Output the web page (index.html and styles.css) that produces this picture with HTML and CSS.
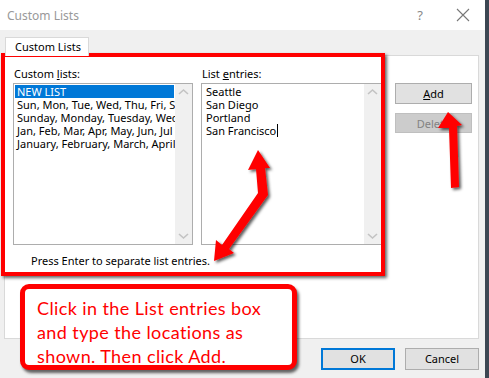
FILE: index.html
```html
<!DOCTYPE html>
<html>
<head>
<meta charset="utf-8">
<link rel="stylesheet" href="styles.css">
</head>
<body>
<div class="window">
  <div class="titlebar">
    <span class="title">Custom Lists</span>
    <span class="help">?</span>
    <svg class="close" width="14" height="14" viewBox="0 0 14 14"><path d="M1 1L13 13M13 1L1 13" stroke="#777" stroke-width="1.1" fill="none"/></svg>
  </div>
  <div class="client">
    <div class="tab">Custom Lists</div>
    <div class="panel">
      <div class="cols">
        <div class="col col-lists">
          <div class="label">Custom <u>l</u>ists:</div>
          <div class="listbox">
            <div class="items">
              <div class="item selected">NEW LIST</div>
              <div class="item">Sun, Mon, Tue, Wed, Thu, Fri, Sat</div>
              <div class="item">Sunday, Monday, Tuesday, Wednesday</div>
              <div class="item">Jan, Feb, Mar, Apr, May, Jun, Jul</div>
              <div class="item">January, February, March, April</div>
            </div>
            <div class="scroll">
              <svg width="17" height="10" viewBox="0 0 17 10"><path d="M4 7L8.5 3L13 7" stroke="#c3c3c3" stroke-width="1.6" fill="none"/></svg>
              <svg width="17" height="10" viewBox="0 0 17 10"><path d="M4 3L8.5 7L13 3" stroke="#c3c3c3" stroke-width="1.6" fill="none"/></svg>
            </div>
          </div>
        </div>
        <div class="col col-entries">
          <div class="label">List <u>e</u>ntries:</div>
          <div class="listbox">
            <div class="items entries">
              <div class="item">Seattle</div>
              <div class="item">San Diego</div>
              <div class="item">Portland</div>
              <div class="item">San Francisco<span class="caret"></span></div>
            </div>
            <div class="scroll">
              <svg width="17" height="10" viewBox="0 0 17 10"><path d="M4 7L8.5 3L13 7" stroke="#c3c3c3" stroke-width="1.6" fill="none"/></svg>
              <svg width="17" height="10" viewBox="0 0 17 10"><path d="M4 3L8.5 7L13 3" stroke="#c3c3c3" stroke-width="1.6" fill="none"/></svg>
            </div>
          </div>
        </div>
        <div class="col col-buttons">
          <div class="btn"><u>A</u>dd</div>
          <div class="btn disabled">Delete</div>
        </div>
      </div>
      <div class="hint">Press Enter to separate list entries.</div>
    </div>
    <div class="footer">
      <div class="btn ok">OK</div>
      <div class="btn">Cancel</div>
    </div>
  </div>
</div>

<div class="redbox"></div>
<div class="callout">Click in the List entries box<br>and type the locations as<br>shown. Then click Add.</div>

<svg class="arrows" width="489" height="378" viewBox="0 0 489 378">
  <defs>
    <filter id="sh" x="-50%" y="-50%" width="200%" height="200%">
      <feDropShadow dx="2" dy="2" stdDeviation="1.5" flood-color="#000" flood-opacity="0.65"/>
    </filter>
  </defs>
  <g filter="url(#sh)" fill="#ff0000">
    <polygon points="248,170 258,150 270,168 265,168 268,195 229,249 234,253 214,261 216,240 222,245 258,193 256,169"/>
    <polygon points="438,128 448,112 462,125 457,126 459,187 451,188 449,128"/>
  </g>
</svg>
</body>
</html>
```
FILE: styles.css
```css
* { box-sizing: border-box; }
html, body { margin: 0; padding: 0; }
body {
  width: 489px;
  height: 378px;
  overflow: hidden;
  background: #3c4652;
  font-family: "Noto Sans", sans-serif;
  font-size: 11px;
  color: #000;
  position: relative;
}
.window {
  width: 485px;
  height: 378px;
  background: #f0f0f0;
  display: flex;
  flex-direction: column;
}
.titlebar {
  height: 30px;
  background: #fff;
  display: flex;
  align-items: center;
  padding-left: 7px;
}
.title { color: #999; font-size: 12px; flex: 1; }
.help { color: #888; font-size: 13px; margin-right: 33px; }
.close { margin-right: 15px; }
.client { flex: 1; display: flex; flex-direction: column; padding: 7px 6px 0 4px; }
.tab {
  margin-left: 1px;
  width: 84px;
  height: 19px;
  background: #fff;
  border: 1px solid #d9d9d9;
  border-bottom: none;
  padding-left: 9px;
  line-height: 18px;
  position: relative;
  z-index: 1;
  margin-bottom: -1px;
}
.panel {
  height: 284px;
  background: #fff;
  border: 1px solid #d9d9d9;
  padding: 11px 0 0 8px;
}
.cols { display: flex; }
.col-lists { width: 180px; margin-right: 8px; }
.col-entries { width: 181px; margin-right: 13px; }
.col-buttons { width: 77px; padding-top: 16px; display: flex; flex-direction: column; gap: 9px; }
.label { height: 16px; line-height: 14px; padding-left: 1px; }
.listbox {
  height: 162px;
  border: 1px solid #adadad;
  display: flex;
  background: #fff;
}
.items { flex: 1; padding: 1px; overflow: hidden; white-space: nowrap; }
.item { height: 13px; line-height: 13px; padding-left: 2px; }
.item.selected { background: #0078d7; color: #fff; }
.entries { padding-left: 2px; }
.caret { display: inline-block; width: 1px; height: 13px; background: #000; vertical-align: top; margin-left: 1px; }
.scroll {
  width: 17px;
  background: #f0f0f0;
  display: flex;
  flex-direction: column;
  justify-content: space-between;
  padding: 3px 0;
}
.scroll svg { display: block; }
.btn {
  height: 21px;
  background: #e1e1e1;
  border: 1px solid #adadad;
  text-align: center;
  line-height: 19px;
}
.btn.disabled { background: #cccccc; border-color: #bfbfbf; color: #838383; height: 20px; }
.hint { margin-top: 9px; padding-left: 18px; line-height: 14px; }
.footer { display: flex; justify-content: flex-end; gap: 10px; padding: 9px 0 0 0; }
.footer .btn { width: 74px; height: 22px; line-height: 20px; }
.footer .btn.ok { border: 2px solid #0078d7; line-height: 18px; }

.redbox {
  position: absolute;
  left: 1px;
  top: 53px;
  width: 384px;
  height: 223px;
  border: 4px solid #ff0000;
  box-shadow: 2px 2px 3px rgba(0,0,0,0.6);
}
.callout {
  position: absolute;
  left: 20px;
  top: 284px;
  width: 277px;
  height: 86px;
  background: #fff;
  border: 5px solid #ff0000;
  border-radius: 9px;
  box-shadow: 2px 3px 3px rgba(0,0,0,0.6);
  color: #ff0000;
  font-family: "Lato", sans-serif;
  font-size: 18px;
  letter-spacing: 0.4px;
  line-height: 24px;
  padding: 7px 0 0 12px;
  white-space: nowrap;
}
.arrows { position: absolute; left: 0; top: 0; pointer-events: none; }
```
